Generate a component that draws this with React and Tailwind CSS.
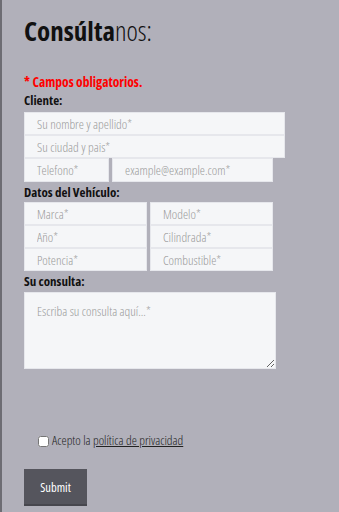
import React, { useState } from "react";

function Field({ placeholder, className = "" }) {
  return (
    <input
      type="text"
      placeholder={placeholder}
      className={
        "h-[23px] bg-[#f5f6f8] border border-[#e6e7ec] pl-3 text-[13px] font-light text-gray-700 placeholder:text-[#9a9a9a] outline-none " +
        className
      }
    />
  );
}

export default function App() {
  const [accepted, setAccepted] = useState(false);

  return (
    <div
      className="min-h-[512px] w-full bg-[#b1b0ba] border-l-2 border-[#6d6c73] pl-[22px] pt-[14px] pb-[6px]"
      style={{ fontFamily: '"Open Sans", "Liberation Sans", sans-serif', fontStretch: "condensed" }}
    >
      {/* Heading */}
      <h1 className="text-[27px] leading-[34px] text-[#111]">
        <span className="font-bold">Consúlta</span>
        <span className="font-light">nos:</span>
      </h1>

      <form className="mt-[26px] flex flex-col">
        <p className="text-[13.5px] leading-[16px] font-bold text-[#ff0000]">
          * Campos obligatorios.
        </p>

        {/* Cliente */}
        <label className="mt-[2px] text-[13px] leading-[16px] font-bold text-[#111]">Cliente:</label>
        <div className="mt-[4px] flex flex-col w-[261px]">
          <Field placeholder="Su nombre y apellido*" className="w-full" />
          <Field placeholder="Su ciudad y pais*" className="w-full" />
        </div>
        <div className="flex gap-[3px]">
          <Field placeholder="Telefono*" className="w-[85px] h-[24px]" />
          <Field placeholder="example@example.com*" className="w-[161px] h-[24px]" />
        </div>

        {/* Vehiculo */}
        <label className="mt-[2px] text-[13px] leading-[16px] font-bold text-[#111]">
          Datos del Vehículo:
        </label>
        <div className="mt-[2px] grid grid-cols-[123px_123px] gap-x-[3px] w-[249px]">
          <Field placeholder="Marca*" className="w-full" />
          <Field placeholder="Modelo*" className="w-full" />
          <Field placeholder="Año*" className="w-full" />
          <Field placeholder="Cilindrada*" className="w-full" />
          <Field placeholder="Potencia*" className="w-full" />
          <Field placeholder="Combustible*" className="w-full" />
        </div>

        {/* Consulta */}
        <label className="mt-[2px] text-[13px] leading-[16px] font-bold text-[#111]">Su consulta:</label>
        <textarea
          placeholder="Escriba su consulta aquí...*"
          className="mt-[3px] w-[252px] h-[77px] bg-[#f5f6f8] border border-[#e6e7ec] px-3 pt-[9px] text-[13px] font-light text-gray-700 placeholder:text-[#9a9a9a] outline-none resize"
        />

        {/* Privacidad */}
        <div className="mt-[63px] ml-[14px] h-[18px] flex items-center gap-[3px] text-[13px] font-light text-[#222]">
          <input
            type="checkbox"
            checked={accepted}
            onChange={() => setAccepted(!accepted)}
            className="w-[11px] h-[11px] m-0"
          />
          <span>
            Acepto la{" "}
            <a href="#" className="underline">
              política de privacidad
            </a>
          </span>
        </div>

        <button
          type="button"
          className="mt-[19px] w-[63px] h-[37px] pt-[4px] bg-[#55555d] text-white text-[12.5px] border-b-2 border-[#47474e]"
        >
          Submit
        </button>
      </form>
    </div>
  );
}
